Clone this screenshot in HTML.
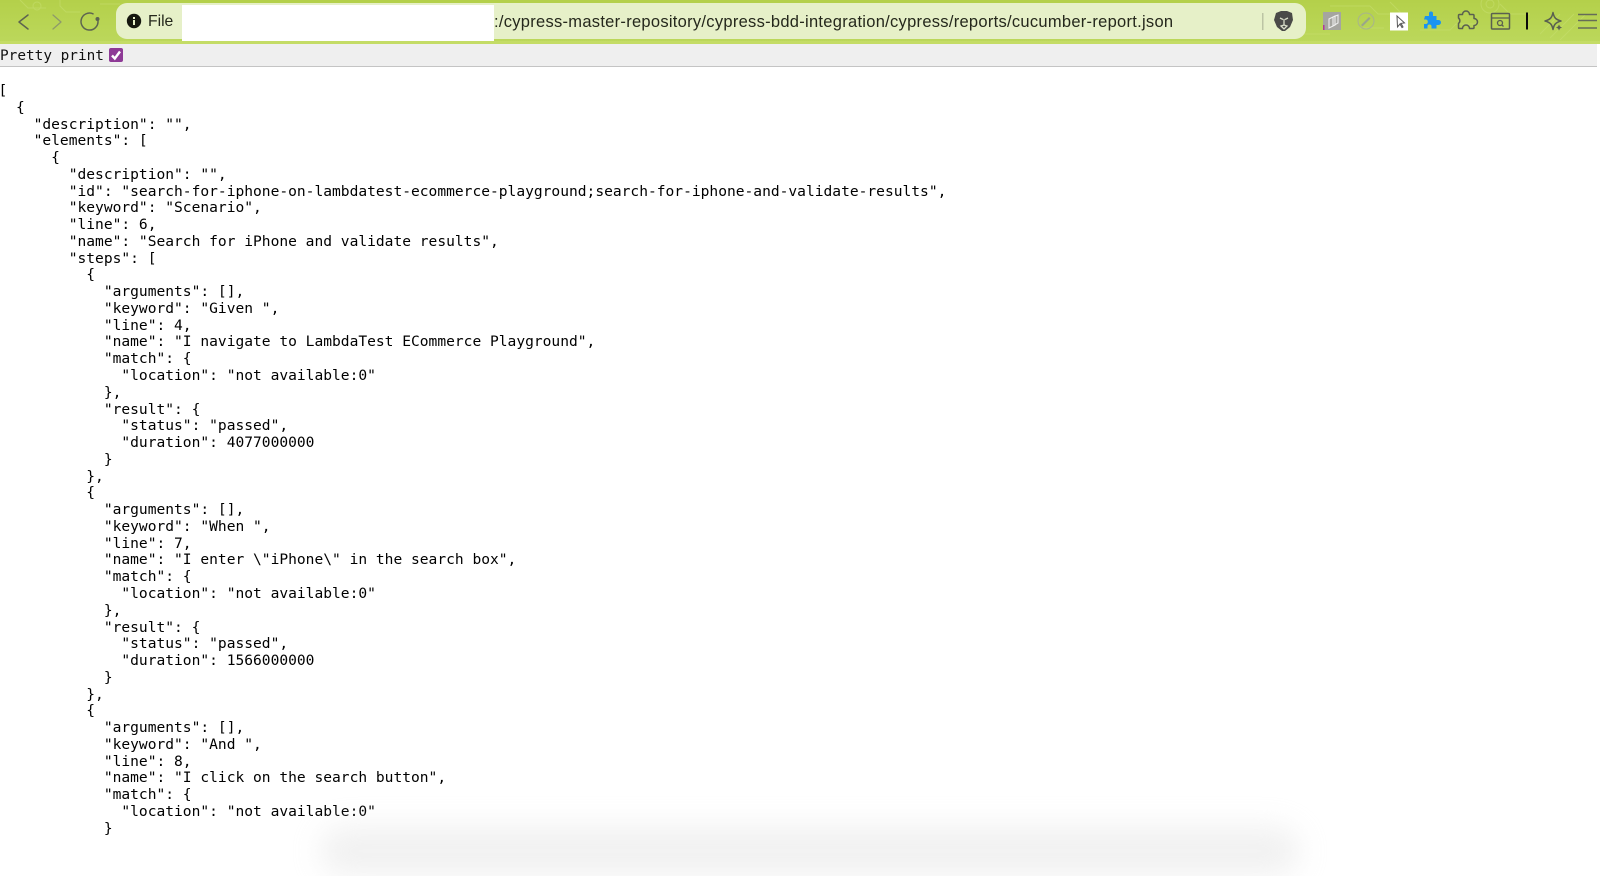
<!DOCTYPE html>
<html><head><meta charset="utf-8"><style>
html,body{margin:0;padding:0;width:1600px;height:826px;overflow:hidden;background:#fff}
.abs{position:absolute}
#tb{left:0;top:0;width:1600px;height:44px;background:linear-gradient(#b4d04a,#bcd85c)}
#url{left:116px;top:3px;width:1190px;height:36px;border-radius:11px;background:#e6f0c8}
#white{left:182px;top:5px;width:312px;height:36px;background:#fff}
.t{font-family:"Liberation Sans",sans-serif;color:#25281c;white-space:pre;line-height:18px}
#bar{left:0;top:44px;width:1597px;height:22px;background:#efefef;border-bottom:1.5px solid #c4c4c4;box-sizing:content-box}
#pp{left:0;top:47px;font:14.4px/18px "DejaVu Sans Mono",monospace;color:#111;white-space:pre}
#cb{left:109px;top:48px;width:14px;height:14px;background:#8e3a96;border-radius:2px}
pre{position:absolute;left:-1.5px;top:83px;margin:0;font:14.58px/16.76px "DejaVu Sans Mono",monospace;color:#000}
#sh{left:320px;top:826px;width:980px;height:50px;background:#ddd;border-radius:40px;filter:blur(14px);opacity:.4}
</style></head><body>
<pre>[
  {
    "description": "",
    "elements": [
      {
        "description": "",
        "id": "search-for-iphone-on-lambdatest-ecommerce-playground;search-for-iphone-and-validate-results",
        "keyword": "Scenario",
        "line": 6,
        "name": "Search for iPhone and validate results",
        "steps": [
          {
            "arguments": [],
            "keyword": "Given ",
            "line": 4,
            "name": "I navigate to LambdaTest ECommerce Playground",
            "match": {
              "location": "not available:0"
            },
            "result": {
              "status": "passed",
              "duration": 4077000000
            }
          },
          {
            "arguments": [],
            "keyword": "When ",
            "line": 7,
            "name": "I enter \"iPhone\" in the search box",
            "match": {
              "location": "not available:0"
            },
            "result": {
              "status": "passed",
              "duration": 1566000000
            }
          },
          {
            "arguments": [],
            "keyword": "And ",
            "line": 8,
            "name": "I click on the search button",
            "match": {
              "location": "not available:0"
            }
</pre>
<div class="abs" id="sh"></div>
<div class="abs" id="tb"></div>
<svg class="abs" style="left:0;top:0" width="1600" height="44" fill="none">
<g stroke="#c6de6e" stroke-width="1" opacity=".6">
<path d="M20 0l8 8h18M60 0v6l6 6h14M100 4h20M1330 6h40l8 8h14M1390 2l10 10v16M1420 30h30l6-6h20M1500 4l10 10h20M1540 34l20-20M1550 38l24-24M1560 40l26-26M1300 34h30M1360 28h24"/>
<circle cx="1490" cy="4" r="9"/><circle cx="1490" cy="4" r="4"/><circle cx="37" cy="6" r="4"/>
</g>
<rect x="0" y="41" width="1600" height="3" fill="#c4dc66"/>
<path d="M28 15l-9 7 9 7" stroke="#5d6450" stroke-width="1.500" stroke-linecap="round" stroke-linejoin="round"/>
<path d="M53 15l8 7-8 7" stroke="#8e9a6a" stroke-width="1.300" stroke-linecap="round" stroke-linejoin="round"/>
<path d="M98 21a8.500 8.500 0 1 1-5-7.200" stroke="#5d6450" stroke-width="1.500" stroke-linecap="round"/>
<circle cx="97.500" cy="19" r="2" fill="#5d6450"/>
</svg>
<div class="abs" id="url"></div>
<svg class="abs" style="left:126px;top:13px" width="16" height="16"><circle cx="8" cy="8" r="7.200" fill="#15170f"/><rect x="7" y="7" width="2" height="5" fill="#e6f0c8"/><rect x="7" y="4" width="2" height="2" fill="#e6f0c8"/></svg>
<div class="abs t" style="left:148px;top:13px;font-size:15.7px">File</div>
<div class="abs t" style="left:494px;top:13px;font-size:16.5px;letter-spacing:.28px">:/cypress-master-repository/cypress-bdd-integration/cypress/reports/cucumber-report.json</div>
<div class="abs" id="white"></div>
<svg class="abs" style="left:1260px;top:0" width="340" height="44" fill="none">
<rect x="2" y="13" width="1.500" height="17" fill="#bcc4a4"/>
<path d="M16 13l5-2h6l5 2 1 7-3 7-5 4h-3l-5-4-3-7z" fill="#4a4a48"/>
<path d="M20 18l3 1.500M28 18l-3 1.500M24 19v6M21 26l3-1 3 1-3 3z" stroke="#d8dcc8" stroke-width="1.300"/>
<rect x="63" y="12" width="18" height="18" fill="#a5a5a0"/>
<path d="M69 28v-9l6-3v9zM73 26v-9l5-2v8z" stroke="#eee" stroke-width="1.100"/>
<rect x="63" y="25" width="1.500" height="5" fill="#b03a9a"/>
<circle cx="106" cy="21" r="8" stroke="#a8b48c" stroke-width="1"/>
<path d="M101 25l8-8 1.500 1.500-8 8z" fill="#9aa68a"/>
<rect x="130" y="12.500" width="18" height="18" fill="#fff"/>
<path d="M137 16l.5 11 2.500-3 2 3.500 1-.6-2-3.500 3.500-.5z" fill="#fff" stroke="#555" stroke-width="1"/>
<path d="M166 16h4v-2.500a2 2 0 0 1 4 0V16h3.500v4h2a2.300 2.300 0 0 1 0 5h-2v3.500h-5v-2a2 2 0 0 0-4 0v2h-3.500v-4.500h2a2.300 2.300 0 0 0 0-4.500h-2z" fill="#1a94f0" transform="translate(-1,0)"/>
<path d="M204 16h3a3.500 3.500 0 0 1 7 0h3.500a1 1 0 0 1 1 1v3a3.500 3.500 0 0 1 0 7v2a1 1 0 0 1-1 1H214a3.500 3.500 0 0 0-7 0h-3a1 1 0 0 1-1-1v-4a3.500 3.500 0 0 0 0-5.500v-2.500a1 1 0 0 1 1-1z" stroke="#5a6050" stroke-width="1.500" stroke-linejoin="round" transform="translate(-4.500,-1.500)"/>
<rect x="231.500" y="13.500" width="18" height="15.500" rx="1" stroke="#5a6050" stroke-width="1.500"/>
<path d="M231.500 18h18" stroke="#5a6050" stroke-width="1.300"/>
<circle cx="240" cy="23" r="2.500" stroke="#5a6050" stroke-width="1.300"/><path d="M242 25l1.500 1.500" stroke="#5a6050" stroke-width="1.300"/>
<rect x="266" y="12.500" width="2" height="17" fill="#0a0a0a"/>
<path d="M293 12.500c1 5 2.500 7 8 8.500-5.500 1.500-7 3.500-8 8.500-1-5-2.500-7-8-8.500 5.500-1.500 7-3.500 8-8.500z" stroke="#5a6050" stroke-width="1.500" stroke-linejoin="round"/>
<path d="M299 24.500l1 2 2 1-2 1-1 2-1-2-2-1 2-1z" fill="#5a6050"/>
<path d="M318 14.500h19M318 20.500h19M318 28h19" stroke="#666c58" stroke-width="1.500"/>
</svg>
<div class="abs" id="bar"></div>
<div class="abs" id="pp">Pretty print</div>
<svg class="abs" id="cb" width="14" height="14" fill="none"><path d="M3 7.500l2.800 3L11 3.500" stroke="#fff" stroke-width="2.400"/></svg>
</body></html>
